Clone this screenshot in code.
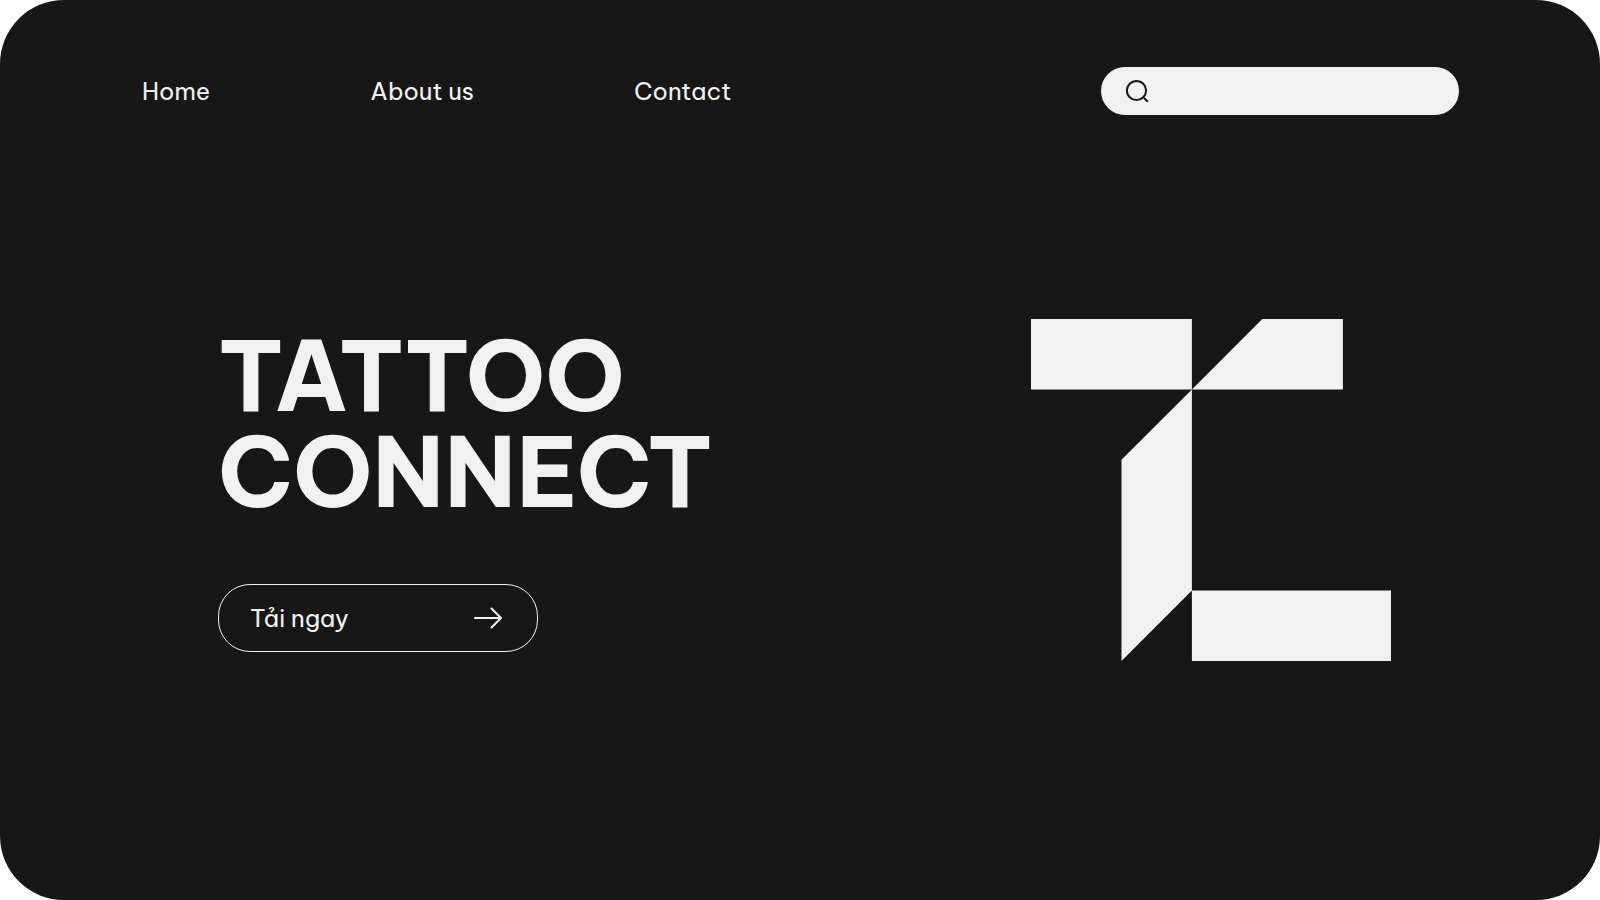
<div class="page">
  <header>
    <nav>
      <a href="#home">Home</a>
      <a href="#about">About us</a>
      <a href="#contact">Contact</a>
    </nav>
    <form class="search" role="search">
      <svg width="24" height="24" viewBox="0 0 24 24" fill="none" stroke="#171717" stroke-width="2" aria-hidden="true">
        <circle cx="11.500" cy="11.500" r="9.600" />
        <path d="M19 19L22.800 22.800" />
      </svg>
      <input type="search" aria-label="Search" />
    </form>
  </header>
  <main>
    <section class="intro">
      <h1>TATTOO<br />CONNECT</h1>
      <button type="button">
        <span>Tải ngay</span>
        <svg width="28" height="22" viewBox="0 0 28 22" fill="none" stroke="currentColor" stroke-width="2" stroke-linecap="round" stroke-linejoin="round" aria-hidden="true">
          <path d="M1 11h26M17.500 1.500l9.500 9.500l-9.500 9.500" />
        </svg>
      </button>
    </section>
    <svg class="logo" viewBox="0 0 360 342" fill="#f1f1f1" role="img" aria-label="TC">
      <path d="M0 0H160.900V70.400H0Z" />
      <path d="M160.900 70.400L231.300 0H311.900V70.400Z" />
      <path d="M160.900 70.400V271.400L90.500 341.900V140.800Z" />
      <path d="M160.900 271.400H360V341.900H160.900Z" />
    </svg>
  </main>
</div>

<style>
  :global(body) {
    margin: 0;
    background: #fff;
  }

  .page {
    box-sizing: border-box;
    min-height: 100vh;
    padding: 67px 141px 0;
    border-radius: 64px;
    background: #171717;
    color: #f1f1f1;
    font-family: "Be Vietnam Pro", Inter, sans-serif;
  }

  header {
    display: flex;
    flex-wrap: wrap;
    align-items: center;
    justify-content: space-between;
    gap: 24px;
  }

  nav {
    display: flex;
    gap: 160px;
    padding-left: 1px;
  }

  a {
    color: inherit;
    font-size: 24px;
    line-height: 32px;
    text-decoration: none;
  }

  .search {
    box-sizing: border-box;
    display: flex;
    align-items: center;
    gap: 12px;
    width: 358px;
    height: 48px;
    padding: 0 24px;
    border-radius: 24px;
    background: #f1f1f1;
  }

  input {
    flex: 1;
    min-width: 0;
    padding: 0;
    border: 0;
    outline: 0;
    background: transparent;
    color: #171717;
    font: inherit;
    font-size: 20px;
  }

  main {
    display: flex;
    flex-wrap: wrap;
    align-items: flex-start;
    justify-content: space-between;
    gap: 48px;
    padding: 204px 68px 48px 77px;
  }

  h1 {
    margin: 9px 0 64px;
    font-size: 96px;
    font-weight: 700;
    line-height: 96px;
  }

  button {
    box-sizing: border-box;
    display: flex;
    align-items: center;
    justify-content: space-between;
    width: 320px;
    height: 68px;
    padding: 0 35px 0 31px;
    border: 1px solid #f1f1f1;
    border-radius: 32px;
    background: transparent;
    color: inherit;
    font: inherit;
    font-size: 24px;
    cursor: pointer;
  }

  .logo {
    width: 360px;
    height: 342px;
  }
</style>
